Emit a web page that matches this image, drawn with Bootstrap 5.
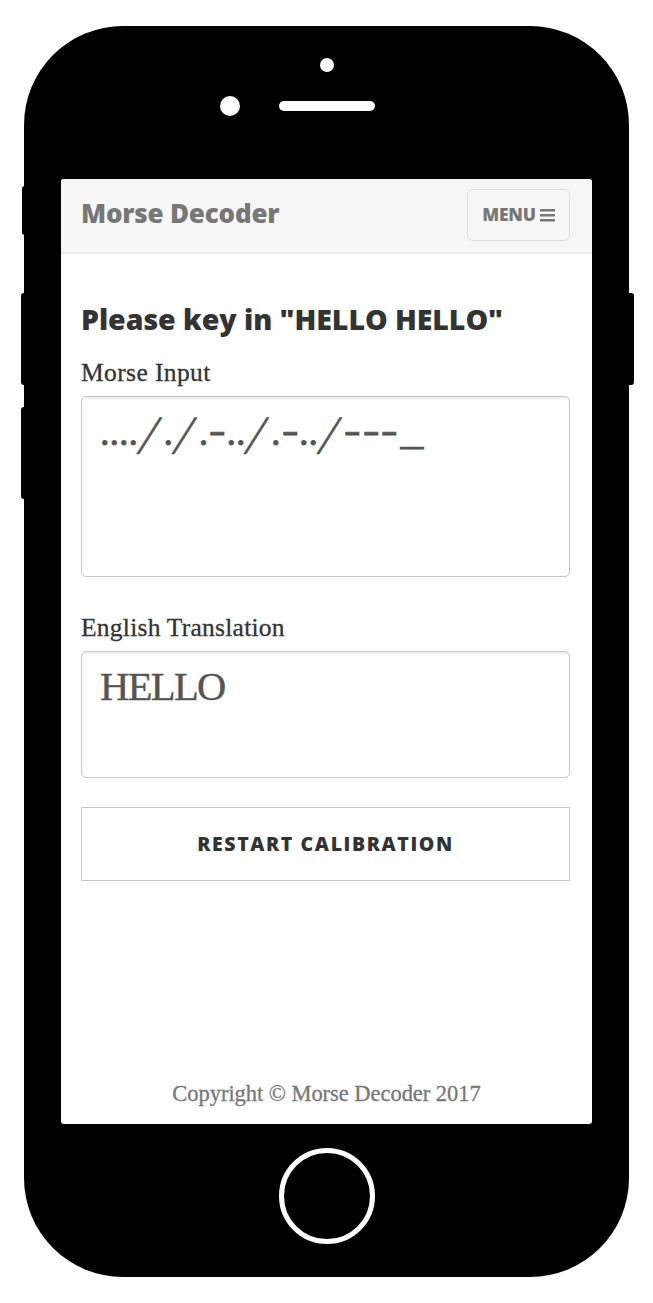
<!DOCTYPE html>
<html lang="en">
<head>
<meta charset="utf-8">
<meta name="viewport" content="width=device-width, initial-scale=1">
<title>Morse Decoder</title>
<link rel="stylesheet" href="https://cdn.jsdelivr.net/npm/bootstrap@5.3.0/dist/css/bootstrap.min.css">
<style>
body{background:#fff;color:#333;font-family:"Liberation Serif",serif}
.phone{width:605px;height:1251px;margin:26px 24px 0;padding:153px 37px 0;background:#000;border-radius:99px}
.part{position:absolute;background:#000}
.lens{background:#fff;border-radius:50px}
.lens-top{left:296px;top:32px;width:14px;height:14px}
.lens-side{left:196px;top:70px;width:20px;height:20px}
.speaker{left:255px;top:75px;width:96px;height:10px}
.mute{left:-2px;top:160px;width:8px;height:49px;border-radius:3px}
.vol-up{left:-3px;top:267px;width:9px;height:92px;border-radius:3px}
.vol-down{left:-3px;top:381px;width:9px;height:92px;border-radius:3px}
.power{right:-5px;top:267px;width:12px;height:92px;border-radius:3px}
.home{left:255px;top:1122px;width:96px;height:96px;border:5px solid #fff;border-radius:50%}
.screen{width:531px;height:945px;border-radius:3px;background:#fff}
.topbar{height:75px;background:#f7f7f7;border-bottom:2px solid #ebebeb;padding:9px 22px 0 20px}
.sans{font-family:"Open Sans",sans-serif;font-weight:800}
.brand{font-size:26px;line-height:36px;padding-top:7px;color:#777;letter-spacing:-.2px}
.menu-btn{width:103px;height:52px;margin-top:.5px;border:1.5px solid #ddd;border-radius:6px;font-size:17.5px;color:#777;padding:0;gap:4px;letter-spacing:-.2px}
.content{padding:45px 22px 0 20px}
.title{font-size:28.5px;line-height:40px;margin:0;white-space:nowrap;letter-spacing:-.05px}
.field-label{font-size:25.5px;line-height:32px;white-space:nowrap;padding-top:1px;-webkit-text-stroke:.3px #333}
.label-morse{margin-top:17px;letter-spacing:.4px}
.label-english{margin-top:34px;letter-spacing:.25px}
.field{margin-top:7px;border:1.5px solid #c8c8c8;border-radius:5px;box-shadow:inset 0 2px 2px rgba(0,0,0,.075);color:#555;padding:10px 18px;line-height:50px;white-space:nowrap}
.morse{height:181px;font-size:38px;-webkit-text-stroke:.9px #555}
.english{height:127px;font-size:40.5px;letter-spacing:-1.6px;-webkit-text-stroke:.4px #555}
.slash,.dash,.cursor{display:inline-block}
.slash{width:25.6px;text-align:center;transform:translate(-1px,3px) skewX(-20deg) scale(1.1,1.4)}
.dash{width:18.3px;text-align:center;transform:translateY(-2px) scaleX(1.3)}
.cursor{width:24px;text-align:center;transform:translate(2px,-1px) scaleX(1.18)}
.restart{height:74px;border:1.5px solid #c8c8c8;border-radius:0;color:#333;font-size:19.5px;letter-spacing:1.6px;margin-top:29px;padding:0 0 1px}
.copy{font-size:22.5px;line-height:30px;color:#777;padding-bottom:15px;white-space:nowrap;letter-spacing:-.04px;-webkit-text-stroke:.3px #777}
</style>
</head>
<body>
<main class="phone position-relative">
  <span class="part lens lens-top"></span><span class="part lens lens-side"></span><span class="part lens speaker"></span>
  <span class="part mute"></span><span class="part vol-up"></span><span class="part vol-down"></span><span class="part power"></span>
  <div class="screen d-flex flex-column overflow-hidden">
    <nav class="topbar d-flex justify-content-between align-items-start">
      <span class="brand sans">Morse Decoder</span>
      <button class="btn menu-btn sans d-flex align-items-center justify-content-center" type="button"><span>MENU</span>
        <svg width="15" height="14" viewBox="0 0 15 14"><path d="M0 2.2h15M0 7.2h15M0 12.2h15" stroke="#777" stroke-width="2.4"/></svg>
      </button>
    </nav>
    <section class="content">
      <h1 class="title sans">Please key in "HELLO HELLO"</h1>
      <div class="field-label label-morse">Morse Input</div>
      <div class="field morse">....<span class="slash">/</span>.<span class="slash">/</span>.<span class="dash">-</span>..<span class="slash">/</span>.<span class="dash">-</span>..<span class="slash">/</span><span class="dash">-</span><span class="dash">-</span><span class="dash">-</span><span class="cursor">_</span></div>
      <div class="field-label label-english">English Translation</div>
      <div class="field english">HELLO</div>
      <button class="btn restart sans w-100" type="button">RESTART CALIBRATION</button>
    </section>
    <footer class="copy text-center mt-auto">Copyright © Morse Decoder 2017</footer>
  </div>
  <span class="part home"></span>
</main>
<script src="https://cdn.jsdelivr.net/npm/bootstrap@5.3.0/dist/js/bootstrap.bundle.min.js"></script>
</body>
</html>
